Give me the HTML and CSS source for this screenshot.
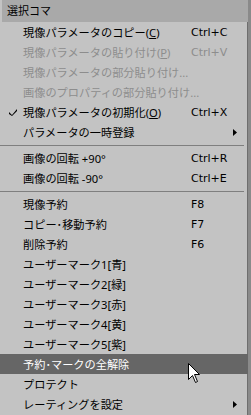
FILE: index.html
```html
<!DOCTYPE html>
<html lang="ja">
<head>
    <meta charset="UTF-8">
    <meta name="viewport" content="width=device-width, initial-scale=1.0">
    <title>選択コマ</title>
    <link rel="stylesheet" href="styles.css">
</head>
<body>
    <div class="menu">
        <div class="menu-title">選択コマ</div>

        <div class="item">
            <span class="check"></span>
            <span class="label">現像パラメータのコピー(<u>C</u>)</span>
            <span class="key">Ctrl+C</span>
            <span class="sub"></span>
        </div>
        <div class="item disabled">
            <span class="check"></span>
            <span class="label">現像パラメータの貼り付け(<u>P</u>)</span>
            <span class="key">Ctrl+V</span>
            <span class="sub"></span>
        </div>
        <div class="item disabled">
            <span class="check"></span>
            <span class="label">現像パラメータの部分貼り付け...</span>
            <span class="key"></span>
            <span class="sub"></span>
        </div>
        <div class="item disabled">
            <span class="check"></span>
            <span class="label">画像のプロパティの部分貼り付け...</span>
            <span class="key"></span>
            <span class="sub"></span>
        </div>
        <div class="item">
            <span class="check">
                <svg width="8" height="7" viewBox="0 0 8 7"><path d="M0 3 L3 6 L8 0 L8 2 L3 7 L0 5 Z" fill="#000"/></svg>
            </span>
            <span class="label">現像パラメータの初期化(<u>O</u>)</span>
            <span class="key">Ctrl+X</span>
            <span class="sub"></span>
        </div>
        <div class="item">
            <span class="check"></span>
            <span class="label">パラメータの一時登録</span>
            <span class="key"></span>
            <span class="sub"><svg width="4" height="7" viewBox="0 0 4 7"><path d="M0 0 L4 3.5 L0 7 Z" fill="#000"/></svg></span>
        </div>

        <div class="separator"></div>

        <div class="item">
            <span class="check"></span>
            <span class="label">画像の回転 +90°</span>
            <span class="key">Ctrl+R</span>
            <span class="sub"></span>
        </div>
        <div class="item">
            <span class="check"></span>
            <span class="label">画像の回転 -90°</span>
            <span class="key">Ctrl+E</span>
            <span class="sub"></span>
        </div>

        <div class="separator"></div>

        <div class="item">
            <span class="check"></span>
            <span class="label">現像予約</span>
            <span class="key">F8</span>
            <span class="sub"></span>
        </div>
        <div class="item">
            <span class="check"></span>
            <span class="label">コピー･移動予約</span>
            <span class="key">F7</span>
            <span class="sub"></span>
        </div>
        <div class="item">
            <span class="check"></span>
            <span class="label">削除予約</span>
            <span class="key">F6</span>
            <span class="sub"></span>
        </div>
        <div class="item">
            <span class="check"></span>
            <span class="label">ユーザーマーク1[青]</span>
            <span class="key"></span>
            <span class="sub"></span>
        </div>
        <div class="item">
            <span class="check"></span>
            <span class="label">ユーザーマーク2[緑]</span>
            <span class="key"></span>
            <span class="sub"></span>
        </div>
        <div class="item">
            <span class="check"></span>
            <span class="label">ユーザーマーク3[赤]</span>
            <span class="key"></span>
            <span class="sub"></span>
        </div>
        <div class="item">
            <span class="check"></span>
            <span class="label">ユーザーマーク4[黄]</span>
            <span class="key"></span>
            <span class="sub"></span>
        </div>
        <div class="item">
            <span class="check"></span>
            <span class="label">ユーザーマーク5[紫]</span>
            <span class="key"></span>
            <span class="sub"></span>
        </div>
        <div class="item active">
            <span class="check"></span>
            <span class="label">予約･マークの全解除</span>
            <span class="key"></span>
            <span class="sub"></span>
        </div>
        <div class="item">
            <span class="check"></span>
            <span class="label">プロテクト</span>
            <span class="key"></span>
            <span class="sub"></span>
        </div>
        <div class="item">
            <span class="check"></span>
            <span class="label">レーティングを設定</span>
            <span class="key"></span>
            <span class="sub"><svg width="4" height="7" viewBox="0 0 4 7"><path d="M0 0 L4 3.5 L0 7 Z" fill="#000"/></svg></span>
        </div>

        <!-- マウスカーソル -->
        <svg class="cursor" width="13" height="21" viewBox="0 0 13 21">
            <path d="M0.5 0.5 L0.5 16.5 L4.5 12.5 L7.5 19.5 L9.5 18.5 L6.5 11.5 L11.5 11.5 Z" fill="#fff" stroke="#000" stroke-width="1"/>
        </svg>
    </div>
</body>
</html>
```

FILE: styles.css
```css
body {
    margin: 0;
    background-color: #c3c3c3;
    font-family: "Noto Sans", "Noto Sans CJK JP", sans-serif;
    font-size: 11.2px;
}
.menu {
    position: relative;
    width: 251px;
    height: 415px;
    box-sizing: border-box;
    background: #c3c3c3;
    border-right: 3px solid #8a8a8a;
    box-shadow: inset -1px 0 0 #6e6e6e;
    overflow: hidden;
}
.menu-title {
    height: 22px;
    line-height: 22px;
    margin-left: 2px;
    padding-left: 5px;
    background: #a9a9a9;
    color: #000;
    font-size: 11px;
}
.item {
    display: grid;
    grid-template-columns: 23px 168px 41px 16px;
    height: 20px;
    align-items: center;
    color: #000;
    white-space: nowrap;
}
.item u {
    text-decoration-thickness: 1px;
    text-underline-offset: 1px;
}
.item.disabled {
    color: #8d8d8d;
}
.item.active {
    background: #666;
    color: #fff;
}
.key {
    font-family: "DejaVu Sans", sans-serif;
    font-size: 11px;
}
.check {
    display: flex;
    justify-content: flex-end;
    padding-right: 6px;
}
.check svg,
.sub svg {
    display: block;
}
.sub {
    display: flex;
    padding-left: 1px;
}
.separator {
    height: 6px;
    width: 244px;
    box-sizing: border-box;
    border-top: 3px solid transparent;
    position: relative;
}
.separator::after {
    content: "";
    display: block;
    height: 1px;
    background: #7f7f7f;
}
.cursor {
    position: absolute;
    left: 188px;
    top: 363px;
}
```
